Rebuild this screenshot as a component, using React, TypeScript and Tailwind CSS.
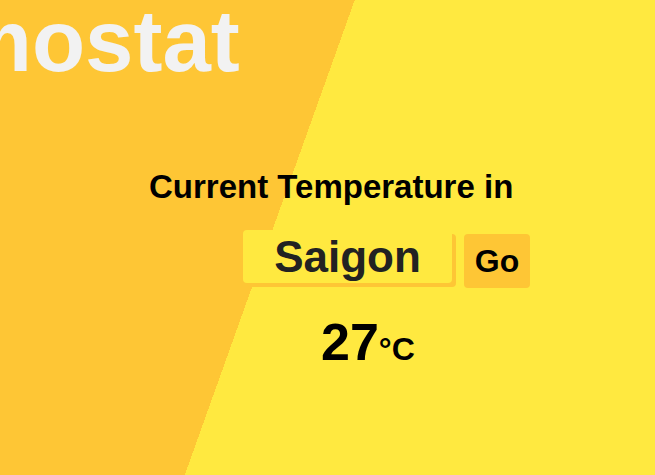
export default function App() {
    return (
        <div className="min-h-screen w-full overflow-hidden font-['Liberation_Sans',Arial,sans-serif] bg-[linear-gradient(109.69deg,#FEC635_334px,#FFE940_334px)]">
            <h1 className="ml-[-234px] mt-[-3px] whitespace-nowrap text-[87px] font-bold leading-none text-[#F2F2F2]">
                Thermostat
            </h1>

            <section className="flex flex-col items-start">
                <h2 className="ml-[149px] mt-[86px] text-[33px] font-bold leading-none text-black">
                    Current Temperature in
                </h2>

                <form
                    className="ml-[243px] mt-[27px] flex flex-row items-start"
                    onSubmit={(e) => e.preventDefault()}
                >
                    <input
                        type="text"
                        defaultValue="Saigon"
                        className="h-[53px] w-[209px] rounded-[4px] bg-[#FFE940] text-center text-[44px] font-bold text-[#222222] shadow-[4px_4px_0_#FEC635] outline-none"
                    />
                    <button
                        type="submit"
                        className="ml-[12px] mt-[4px] h-[54px] w-[66px] rounded-[4px] bg-[#FEC635] text-[32px] font-bold text-black"
                    >
                        Go
                    </button>
                </form>

                <div className="ml-[321px] mt-[28px] text-[52px] font-bold leading-none text-black">
                    27<span className="text-[32px]">°C</span>
                </div>
            </section>
        </div>
    );
}
